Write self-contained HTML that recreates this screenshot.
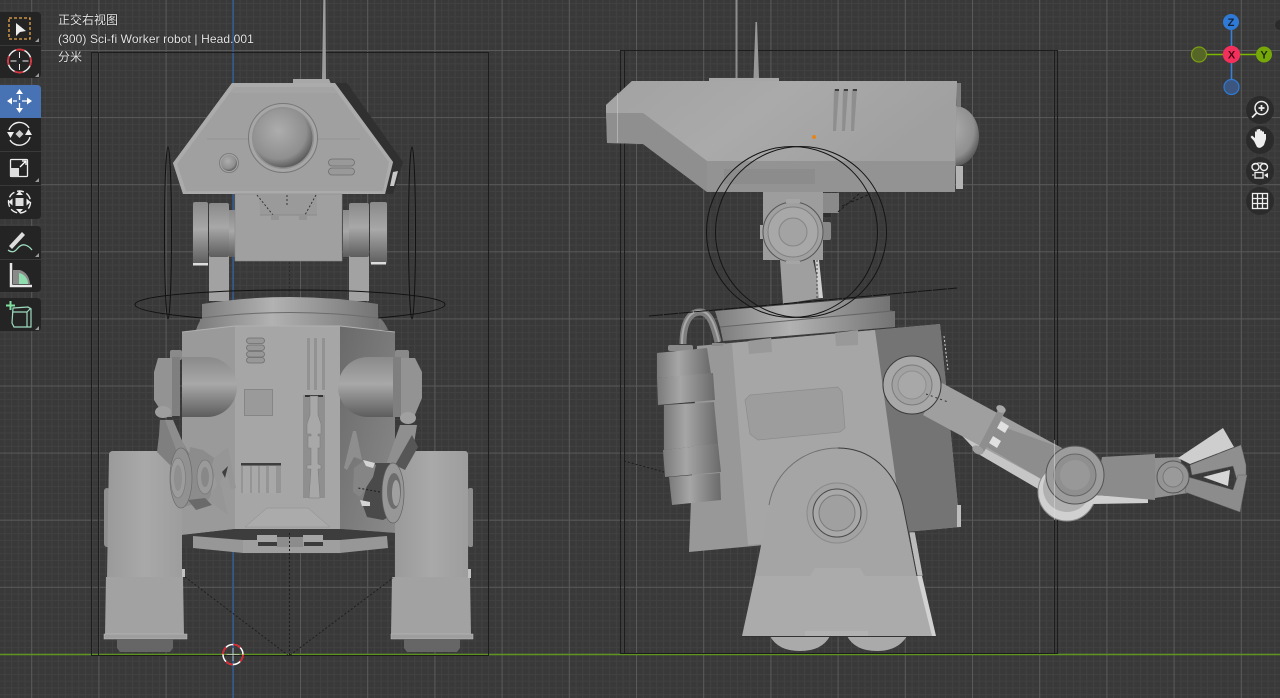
<!DOCTYPE html>
<html><head><meta charset="utf-8"><style>
html,body{margin:0;padding:0;width:1280px;height:698px;overflow:hidden;background:#3a3a3a}
svg{position:absolute;left:0;top:0}
.t{position:absolute;left:58px;color:#e6e6e6;font:12px/14px "Liberation Sans","Noto Sans CJK SC",sans-serif;white-space:nowrap;text-shadow:0 0 1px #000}
</style></head><body>
<svg width="1280" height="698" viewBox="0 0 1280 698">
<defs>
<pattern id="mi" width="6.72" height="6.71" patternUnits="userSpaceOnUse" x="31.2" y="50">
<path d="M0.5 0V6.71M0 0.5H6.72" stroke="#414141" stroke-width="1" fill="none"/>
</pattern>
<pattern id="ma" width="67.2" height="67.1" patternUnits="userSpaceOnUse" x="31.2" y="50">
<path d="M0.5 0V67.1M0 0.5H67.2" stroke="#595959" stroke-width="1" fill="none"/>
</pattern>
<linearGradient id="cv" x1="0" y1="0" x2="0" y2="1"><stop offset="0" stop-color="#8a8a8a"/><stop offset=".45" stop-color="#a8a8a8"/><stop offset="1" stop-color="#5d5d5d"/></linearGradient>
<linearGradient id="ch" x1="0" y1="0" x2="1" y2="0"><stop offset="0" stop-color="#777"/><stop offset=".5" stop-color="#a9a9a9"/><stop offset="1" stop-color="#777"/></linearGradient>
<linearGradient id="ch2" x1="0" y1="0" x2="1" y2="0"><stop offset="0" stop-color="#7a7a7a"/><stop offset=".4" stop-color="#a6a6a6"/><stop offset="1" stop-color="#6a6a6a"/></linearGradient>
<linearGradient id="dome" x1="0" y1="0" x2="1" y2="0"><stop offset="0" stop-color="#7d7d7d"/><stop offset=".4" stop-color="#b2b2b2"/><stop offset="1" stop-color="#737373"/></linearGradient>
<radialGradient id="sph" cx=".42" cy=".38" r=".68"><stop offset="0" stop-color="#adadad"/><stop offset=".7" stop-color="#8f8f8f"/><stop offset="1" stop-color="#4c4c4c"/></radialGradient>
<linearGradient id="dk" x1="0" y1="0" x2="1" y2="1"><stop offset="0" stop-color="#6a6a6a"/><stop offset="1" stop-color="#8a8a8a"/></linearGradient>
<linearGradient id="lg" x1="0" y1="0" x2="1" y2="0"><stop offset="0" stop-color="#9a9a9a"/><stop offset=".5" stop-color="#a9a9a9"/><stop offset="1" stop-color="#9d9d9d"/></linearGradient>
<linearGradient id="hd" x1="0" y1="0" x2="1" y2=".3"><stop offset="0" stop-color="#a2a2a2"/><stop offset=".5" stop-color="#aaa"/><stop offset="1" stop-color="#a0a0a0"/></linearGradient>
</defs>
<rect width="1280" height="698" fill="#393939"/>
<rect width="1280" height="698" fill="url(#mi)"/>
<rect width="1280" height="698" fill="url(#ma)"/>
<!-- axes -->
<path d="M233 0V698" stroke="#2f5c99" stroke-width="1.4"/>
<path d="M0 654.5H1280" stroke="#5f9420" stroke-width="1.4"/>
<!-- bounding boxes -->
<g fill="none" stroke="#1d1d1d" stroke-width="1">
<rect x="91.5" y="52.5" width="397" height="603"/>
<path d="M98.5 52V655"/>
<rect x="620.5" y="50.5" width="437" height="603"/>
<path d="M624.5 50V654M1054.5 50V654"/>
</g>

<!-- LEFT ROBOT -->
<g>
<path d="M322 80L323.3 0H325.5L326 80Z" fill="#9c9c9c"/>
<path d="M293 79H329L331 84H293Z" fill="#a8a8a8"/>
<path d="M333 83L347 83L403 162L393 194H380Z" fill="#303030"/>
<path d="M393 172L398 171L394 186L390 186Z" fill="#c8c8c8"/>
<path d="M232 83H335L393 162L385 194H183L173 163Z" fill="#a0a0a0"/>
<path d="M232 83H335L393 162L385 194H183L173 163ZM234 87L177 164L186 191H383L389 162L333 87Z" fill="#ababab" fill-rule="evenodd"/>
<path d="M234 87H333L338 93H230Z" fill="#a4a4a4"/>
<path d="M207 139H360" stroke="#929292" stroke-width=".8"/>
<circle cx="283" cy="138" r="34.5" fill="#a6a6a6" stroke="#787878"/>
<circle cx="283" cy="138" r="31" fill="#909090"/>
<circle cx="283" cy="138" r="29.5" fill="url(#sph)"/>
<circle cx="229" cy="163" r="9.5" fill="#a5a5a5" stroke="#7d7d7d"/>
<circle cx="229" cy="163" r="8" fill="url(#sph)"/>
<rect x="328.500" y="159" width="26" height="7" rx="3.500" fill="#999" stroke="#6d6d6d" stroke-width=".8"/>
<rect x="328.500" y="168" width="26" height="7" rx="3.500" fill="#999" stroke="#6d6d6d" stroke-width=".8"/>
<rect x="209" y="255" width="20" height="46" fill="#a2a2a2"/>
<rect x="349" y="255" width="20" height="46" fill="#a2a2a2"/>
<rect x="193" y="202" width="15" height="62" rx="2" fill="url(#cv)"/>
<rect x="209" y="203" width="20" height="54" rx="2" fill="url(#cv)"/>
<rect x="229" y="210" width="6" height="47" fill="url(#cv)"/>
<rect x="343" y="210" width="6" height="47" fill="url(#cv)"/>
<rect x="349" y="203" width="20" height="54" rx="2" fill="url(#cv)"/>
<rect x="370" y="202" width="17" height="62" rx="2" fill="url(#cv)"/>
<rect x="193" y="263" width="15" height="2.500" fill="#ddd"/>
<rect x="371" y="262" width="15" height="2.500" fill="#ddd"/>
<rect x="235" y="194" width="107" height="67" fill="#a0a0a0" stroke="#8a8a8a" stroke-width=".6"/>
<path d="M259 194L260 215H317V194Z" fill="#9a9a9a"/>
<g fill="none" stroke="#2c2c2c" stroke-width=".9" stroke-dasharray="2 2">
<path d="M257 195L273 215M287 195V207M316 195L305 215M289.500 262V295"/>
</g>
<path d="M260 215H317" stroke="#838383" stroke-width=".7"/>
<rect x="271" y="215" width="8" height="5" fill="#949494"/><rect x="299" y="215" width="8" height="5" fill="#949494"/>
<path d="M196 330Q200 318 206 315H376Q384 320 388 330Z" fill="url(#dome)"/>
<path d="M202 304Q290 290 378 304V318H202Z" fill="url(#dome)"/>
<path d="M200 319Q290 308 379 319V330H200Z" fill="url(#dome)"/>
<path d="M202 318Q290 307 378 318" fill="none" stroke="#6c6c6c"/>
<rect x="170" y="350" width="12" height="10" rx="2" fill="#8a8a8a"/>
<rect x="395" y="350" width="14" height="10" rx="2" fill="#8a8a8a"/>
<!-- body -->
<path d="M182 332L235 326V529L182 535Z" fill="#9a9a9a"/>
<path d="M235 326H340V529H235Z" fill="#a6a6a6"/>
<path d="M340 326L395 332V533L340 529Z" fill="url(#dk)"/>
<path d="M182 332L235 326H340L395 332" fill="none" stroke="#b0b0b0"/>
<g>
<path d="M182 357H207A30 30 0 0 1 207 417H182Z" fill="url(#cv)"/>
<path d="M393 357H368A30 30 0 0 0 368 417H393Z" fill="url(#cv)"/>
<path d="M158 358H172V417H165L154 400V372Z" fill="#939393"/>
<path d="M172 357H180V416H172Z" fill="#7f7f7f"/>
<rect x="393" y="357" width="8" height="60" fill="#7f7f7f"/>
<path d="M401 358H415L422 372V398L414 417H401Z" fill="#939393"/>
</g>
<g fill="#989898" stroke="#6f6f6f" stroke-width=".8">
<rect x="246.500" y="338" width="18" height="5.500" rx="2.700"/><rect x="246.500" y="345" width="18" height="5.500" rx="2.700"/><rect x="246.500" y="351.500" width="18" height="5.500" rx="2.700"/><rect x="246.500" y="357.500" width="18" height="5.500" rx="2.700"/>
</g>
<g fill="#929292"><rect x="307" y="338" width="3" height="52"/><rect x="314" y="338" width="3" height="52"/><rect x="322" y="338" width="3" height="52"/></g>
<rect x="244.500" y="389.500" width="28" height="26" fill="#9a9a9a" stroke="#868686"/>
<rect x="303" y="395" width="22" height="103" fill="#8f8f8f"/>
<rect x="305" y="395" width="18" height="2" fill="#333"/>
<path d="M310 396H318V415L321 424V434H318V436H320V448H318V464L321 465V469H318L320 498H309L311 469H307V465H311V448H308V436H311V434H307V424L310 415Z" fill="#a8a8a8" stroke="#7a7a7a" stroke-width=".5"/>
<rect x="241" y="464" width="40" height="29" fill="#959595"/>
<g fill="#a8a8a8"><rect x="243" y="466" width="7" height="27"/><rect x="252" y="466" width="6" height="27"/><rect x="260" y="466" width="6" height="27"/><rect x="269" y="466" width="7" height="27"/></g>
<rect x="241" y="463" width="40" height="2.500" fill="#3e3e3e"/>
<path d="M245 527L267 508H308L330 527Z" fill="#ababab" stroke="#8c8c8c" stroke-width=".5"/>
<path d="M182 535L235 529H340L395 533V540L340 553H243L182 545Z" fill="#3d3d3d"/>
<path d="M193 536L243 540H340L387 536L388 548L340 553H243L193 548Z" fill="#979797"/>
<rect x="243" y="540" width="97" height="13" fill="#9f9f9f"/>
<rect x="257" y="535" width="20" height="7" fill="#a6a6a6"/><rect x="303" y="535" width="20" height="7" fill="#a6a6a6"/>
<rect x="258" y="542" width="19" height="4" fill="#3b3b3b"/><rect x="304" y="542" width="19" height="4" fill="#3b3b3b"/>
<rect x="277" y="537" width="26" height="10" fill="#8c8c8c"/>
<!-- legs -->
<rect x="104" y="488" width="6" height="59" rx="3" fill="#8e8e8e"/>
<rect x="468" y="488" width="5" height="59" rx="2" fill="#8e8e8e"/>
<path d="M109 455Q109 451 113 451H170Q180 452 182 462V578H107Z" fill="url(#lg)"/>
<path d="M395 462Q397 452 405 451H465Q468 451 468 455V578H395Z" fill="url(#lg)"/>
<path d="M106 577H183L184 635H105Z" fill="#a2a2a2"/>
<path d="M392 577H470L471 635H391Z" fill="#a2a2a2"/>
<rect x="182" y="569" width="3" height="8" fill="#c2c2c2"/><rect x="468" y="569" width="3" height="9" fill="#c2c2c2"/>
<rect x="104" y="634" width="83" height="5" fill="#9e9e9e" stroke="#c0c0c0" stroke-width=".5"/>
<rect x="391" y="634" width="82" height="5" fill="#9e9e9e" stroke="#c0c0c0" stroke-width=".5"/>
<path d="M117 639H173V648L170 652H120L117 648Z" fill="#666"/>
<path d="M404 639H460V648L457 652H407L404 648Z" fill="#666"/>
<!-- small left arm -->
<path d="M160 420H173L183 443L190 455L170 465L157 452L159 435Z" fill="#7f7f7f"/>
<path d="M165 420H173L183 443L187 452L177 452Z" fill="#8d8d8d"/>
<ellipse cx="163" cy="412" rx="8" ry="6" fill="#9e9e9e"/>
<path d="M190 447L203 450L217 460L210 500L183 507Z" fill="#8c8c8c"/>
<path d="M188 500L205 498L212 505L196 510Z" fill="#6a6a6a"/>
<ellipse cx="181" cy="478" rx="11" ry="30" fill="#919191" stroke="#6c6c6c" stroke-width=".7"/>
<ellipse cx="178" cy="478" rx="7.500" ry="20" fill="#9c9c9c" stroke="#7a7a7a" stroke-width=".7"/>
<ellipse cx="178" cy="478" rx="4" ry="13" fill="#8f8f8f"/>
<path d="M214 458L228 447L236 488L231 489L226 470L220 482L228 515L208 500L217 485L212 465Z" fill="#969696"/>
<ellipse cx="205" cy="477" rx="8" ry="17" fill="#9a9a9a" stroke="#777" stroke-width=".7"/>
<ellipse cx="205" cy="477" rx="4" ry="10" fill="#888"/>
<path d="M222 472L228 466L225 478Z" fill="#3f3f3f"/>
<!-- small right arm -->
<path d="M400 425H417L413 450L405 463L385 468Z" fill="#8f8f8f"/>
<path d="M412 435L418 447L405 470L395 465Z" fill="#565656"/>
<ellipse cx="408" cy="418" rx="8" ry="6" fill="#a0a0a0"/>
<path d="M373 463L390 463L392 515L383 520L367 517L362 503Z" fill="#4a4a4a"/>
<ellipse cx="393" cy="493" rx="11" ry="30" fill="#979797" stroke="#636363" stroke-width=".7"/>
<ellipse cx="394" cy="491" rx="7" ry="18" fill="#6d6d6d"/>
<ellipse cx="396" cy="493" rx="4" ry="13" fill="#a0a0a0"/>
<path d="M350 443L353 431L356 431L362 460L354 457L347 470L344 468Z" fill="#8e8e8e"/>
<path d="M354 468L365 460L376 465L373 477L360 497L353 492Z" fill="#858585"/>
<path d="M363 460L375 463L373 468L366 466ZM360 500L370 502V506L362 506Z" fill="#d4d4d4"/>
<!-- dashed -->
<g fill="none" stroke="#1e1e1e" stroke-width="1" stroke-dasharray="2 2">
<path d="M185 577L289 656L393 578M289.500 533V656"/>
<path d="M380 492L358 488"/>
</g>
<!-- empties -->
<g fill="none" stroke="#111" stroke-width="1">
<path d="M202 318Q135 312 135 304.500C135 296 206 290 290 290S445 296 445 304.500Q445 312 378 318"/>
<ellipse cx="168" cy="233" rx="3.500" ry="86"/>
<ellipse cx="412" cy="233" rx="3.500" ry="86"/>
</g>
<circle cx="233" cy="654.500" r="10" fill="none" stroke="#fff" stroke-width="1.500"/>
<circle cx="233" cy="654.500" r="10" fill="none" stroke="#e0202c" stroke-width="1.600" stroke-dasharray="7.700 8"/>
<path d="M233 648V661M226.500 654.500H239.500" stroke="#ccc" stroke-width=".8"/>
</g>

<!-- RIGHT ROBOT -->
<g>
<path d="M735.500 78V0H737.500V78Z" fill="#8d8d8d"/>
<path d="M753.500 78L755.500 22H757L759 78Z" fill="#989898"/>
<rect x="709" y="78" width="70" height="3.500" fill="#a6a6a6"/>
<ellipse cx="955" cy="136" rx="24" ry="30" fill="url(#sph)"/>
<rect x="957" y="83" width="4" height="24" fill="#7e7e7e"/>
<rect x="956" y="166" width="7" height="23" fill="#b4b4b4"/>
<path d="M632 81H957L955 192H707L643 144L607 143L606 105Z" fill="#939393"/>
<path d="M632 81H957L955 161H707L643 113H606V105Z" fill="url(#hd)"/>
<path d="M606 113H643L707 161V192L643 144L607 143Z" fill="#8f8f8f"/>
<path d="M617.500 93V143" stroke="#ccc" stroke-width=".8" opacity=".7"/>
<rect x="724" y="169" width="91" height="15" fill="#8c8c8c"/>
<g fill="#8e8e8e"><path d="M834 89H839L836 131H833Z"/><path d="M843 89H848L845 131H842Z"/><path d="M852 89H857L854 131H851Z"/></g>
<g fill="#3e3e3e"><rect x="835" y="89" width="4" height="2"/><rect x="844" y="89" width="4" height="2"/><rect x="853" y="89" width="4" height="2"/></g>
<circle cx="814" cy="137" r="2" fill="#e5861a"/>
<path d="M780 260H813L821 298L783 304Z" fill="#9f9f9f"/>
<path d="M815 260H819L823 298H819Z" fill="#cfcfcf"/>
<path d="M817 260V298" stroke="#444" stroke-dasharray="2 2" stroke-width="1"/>
<rect x="763" y="192" width="60" height="68" fill="#9d9d9d"/>
<rect x="823" y="193" width="16" height="20" fill="#8a8a8a"/>
<rect x="824" y="213" width="7" height="4" fill="#2f2f2f"/>
<rect x="760" y="225" width="6" height="14" fill="#a4a4a4"/><rect x="820" y="222" width="11" height="18" rx="2" fill="#888"/>
<circle cx="793" cy="232" r="30" fill="#a0a0a0" stroke="#555"/>
<circle cx="793" cy="232" r="25" fill="#a8a8a8" stroke="#808080"/>
<circle cx="793" cy="232" r="14" fill="#a3a3a3" stroke="#858585"/>
<path d="M786 199H800V203H786ZM786 261H800V264H786Z" fill="#a5a5a5"/>
<path d="M838 212L860 193M842 206L870 194" stroke="#1b1b1b" stroke-dasharray="3 2" fill="none"/>
<path d="M715 311L890 296V312L720 327Z" fill="url(#dome)"/>
<path d="M720 327L895 311V327L723 341Z" fill="url(#dome)"/>
<path d="M720 327L892 311" stroke="#666" fill="none"/>
<!-- body -->
<path d="M697 346L940 324L960 527L689 552Z" fill="#989898"/>
<path d="M732 343L875 330L903 532L748 545Z" fill="#a6a6a6"/>
<path d="M875 330L940 324L960 527L903 532Z" fill="#747474"/>
<rect x="957" y="505" width="4" height="22" fill="#bdbdbd"/>
<path d="M944 336L948 370" stroke="#ccc" stroke-dasharray="2 2"/>
<path d="M748 341L771 338L772 352L749 354Z" fill="#999"/>
<path d="M835 333L858 330L858 345L836 346Z" fill="#999"/>
<path d="M750 395L838 387L842 392L845 428L840 432L758 440L750 434L745 400Z" fill="#9d9d9d" stroke="#8c8c8c" stroke-width=".7"/>
<!-- canister + handle -->
<path d="M683 344C683 322 690 312 700 312C710 312 714 325 718 342" fill="none" stroke="#7e7e7e" stroke-width="7"/>
<path d="M682 344C682 322 690 311 700 311C710 311 715 325 719 342" fill="none" stroke="#a8a8a8" stroke-width="2"/>
<path d="M712 343H725L722 346H712Z" fill="#8a8a8a"/>
<rect x="668" y="345" width="25" height="6" rx="2" fill="#8a8a8a"/>
<path d="M657 353L707 348L711 374L657 378Z" fill="url(#ch2)"/>
<path d="M657 378L713 373L715 400L658 405Z" fill="url(#ch2)"/>
<path d="M664 405L714 402L718 444L664 450Z" fill="url(#ch2)"/>
<path d="M663 450L718 444L721 472L665 477Z" fill="url(#ch2)"/>
<path d="M669 477L720 473L721 500L672 505Z" fill="url(#ch2)"/>
<path d="M624 461L664 472" stroke="#1d1d1d" stroke-dasharray="2 2" fill="none"/>
<!-- wheels -->
<path d="M770 636H830Q822 651 800 651Q778 651 770 636ZM847 636H907Q898 651 877 651Q855 651 847 636Z" fill="#aaa"/>
<path d="M909 532L915 532L923 576H917Z" fill="#bbb" stroke="#333" stroke-width=".5"/>
<path d="M755 576L769 505C775 470 805 448 838 448C870 448 895 470 903 505L917 576Z" fill="#a5a5a5"/>
<path d="M769 505C775 470 805 448 838 448" fill="none" stroke="#707070"/>
<path d="M838 448C870 448 895 470 903 505L917 576" fill="none" stroke="#3a3a3a"/>
<circle cx="837" cy="513" r="30" fill="#a2a2a2" stroke="#8a8a8a"/>
<circle cx="837" cy="513" r="24" fill="#a8a8a8" stroke="#4a4a4a"/>
<circle cx="837" cy="513" r="18" fill="#a0a0a0" stroke="#7b7b7b"/>
<path d="M810 576L815 568H860L865 576Z" fill="#ababab"/>
<path d="M755 576H917L933 636H742Z" fill="#ababab"/>
<path d="M922 576L936 636H932L917 576Z" fill="#d2d2d2"/>
<rect x="805" y="631" width="63" height="5" fill="#b2b2b2"/>
<path d="M742 636.500H936" stroke="#333" stroke-width="1"/>
<!-- arm -->
<path d="M952 425L1043 480L1040 490L980 455Z" fill="#c6c6c6"/>
<path d="M942 383L1062 448L1043 480L923 415Z" fill="#9f9f9f"/>
<path d="M998 425L1062 448L1043 480L985 446Z" fill="#8d8d8d"/>
<path d="M1001 421L1009 426L1005 433L997 428ZM993 436L1001 441L997 448L989 443Z" fill="#e0e0e0"/>
<path d="M1000 406L1006 410L984 452L978 448Z" fill="#8e8e8e"/>
<ellipse cx="1001" cy="409" rx="5" ry="3.500" fill="#a8a8a8" transform="rotate(30 1001 409)"/>
<ellipse cx="978" cy="450" rx="6" ry="4" fill="#9e9e9e" transform="rotate(30 978 450)"/>
<circle cx="912" cy="385" r="29" fill="#a8a8a8" stroke="#3a3a3a"/>
<circle cx="912" cy="385" r="20" fill="#a2a2a2" stroke="#7b7b7b"/>
<circle cx="912" cy="385" r="14" fill="#a8a8a8" stroke="#8f8f8f"/>
<path d="M926 394L948 402" stroke="#333" stroke-dasharray="2 3"/>
<circle cx="1067" cy="492" r="29" fill="#d0d0d0" stroke="#8c8c8c"/>
<circle cx="1067" cy="488" r="24" fill="#b0b0b0"/>
<path d="M1093 495L1148 498L1148 503L1093 504Z" fill="#cfcfcf"/>
<path d="M1102 457L1155 454V500L1095 495Z" fill="#8b8b8b"/>
<path d="M1155 458L1180 457L1188 493L1155 498Z" fill="#919191"/>
<path d="M1178 458L1223 428L1234 447L1190 464Z" fill="#cecece"/>
<path d="M1203 477L1230 470L1228 486Z" fill="#d6d6d6"/>
<path d="M1190 465L1241 445L1246 465V475L1237 480L1233 466L1192 475Z" fill="#8f8f8f" stroke="#666" stroke-width=".5"/>
<path d="M1188 477L1233 490L1238 475L1247 475L1240 512L1185 492Z" fill="#8c8c8c" stroke="#666" stroke-width=".5"/>
<circle cx="1075" cy="475" r="29" fill="#9c9c9c" stroke="#545454"/>
<circle cx="1075" cy="475" r="21" fill="#8f8f8f" stroke="#666"/>
<circle cx="1075" cy="475" r="15" fill="#989898"/>
<circle cx="1173" cy="477" r="16" fill="#949494" stroke="#555"/>
<circle cx="1173" cy="477" r="10" fill="#9a9a9a" stroke="#777"/>
<g fill="none" stroke="#141414" stroke-width="1">
<circle cx="792" cy="232" r="85.500"/><circle cx="801" cy="232" r="85.500"/>
<path d="M649 316L957 288" stroke-dasharray="14 1"/>
</g>
<path d="M1054.500 440V520" stroke="#ddd" stroke-width="1" opacity=".5"/>
</g>

<!-- TOOLBAR -->
<g fill="#242424">
<path d="M0 12H37Q41 12 41 16V74Q41 78 37 78H0Z"/>
<path d="M0 118H41V215Q41 219 37 219H0Z"/>
<path d="M0 226H37Q41 226 41 230V288Q41 292 37 292H0Z"/>
<path d="M0 298H37Q41 298 41 302V327Q41 331 37 331H0Z"/>
</g>
<path d="M0 85H37Q41 85 41 89V118H0Z" fill="#4772b3"/>
<path d="M0 45.500H41M0 151.500H41M0 185.500H41M0 259.500H41" stroke="#393939"/>
<rect x="9" y="18" width="21" height="21" fill="none" stroke="#e9a94c" stroke-width="1.300" stroke-dasharray="3 2"/>
<path d="M16 23V36L20 32L26 31Z" fill="#eee"/>
<g fill="#999"><path d="M39 38V42H35Z"/><path d="M39 74V78H35Z" transform="translate(0 -1)"/><path d="M39 178V182H35Z"/><path d="M39 253V257H35Z"/><path d="M39 326V330H35Z"/></g>
<circle cx="19.500" cy="61" r="11.500" fill="none" stroke="#eee" stroke-width="1.500"/>
<circle cx="19.500" cy="61" r="11.500" fill="none" stroke="#d8323c" stroke-width="1.700" stroke-dasharray="9 9" stroke-dashoffset="4"/>
<path d="M19.500 52V58M19.500 64V70M10.500 61H16.500M22.500 61H28.500" stroke="#eee"/>
<g fill="#fff"><path d="M19.500 89L23 94H16ZM19.500 113L23 108H16ZM7 101L12 97.500V104.500ZM32 101L27 97.500V104.500Z"/></g>
<path d="M19.500 95V100M19.500 103V108M13 101H17M22 101H27" stroke="#fff" stroke-width="1.300"/>
<path d="M9 130A11 11 0 0 1 29 128M30 137A11 11 0 0 1 10 140" fill="none" stroke="#eee" stroke-width="1.400"/>
<path d="M7 132L14 132L10.500 138ZM32 135H25L28.500 129Z" fill="#eee"/>
<path d="M19.500 130L23.500 134L19.500 138L15.500 134Z" fill="#ccc"/>
<rect x="10.500" y="159.500" width="17" height="17" rx="1" fill="none" stroke="#eee" stroke-width="1.300"/>
<rect x="10" y="168" width="9" height="9" fill="#ddd"/>
<path d="M20 167L26 161M22 161H26V165" fill="none" stroke="#fff" stroke-width="1.300"/>
<circle cx="19.500" cy="202" r="11" fill="none" stroke="#eee" stroke-width="1.400" stroke-dasharray="7 2.800"/>
<rect x="15.500" y="198" width="8" height="8" fill="#ddd"/>
<path d="M19.500 191L23 195H16ZM19.500 213L23 209H16ZM8.500 202L12.500 198.500V205.500ZM30.500 202L26.500 198.500V205.500Z" fill="#eee"/>
<path d="M9 246L22 232L25 235L12 249Z" fill="#ddd"/>
<path d="M8 250Q13 254 17 249T25 245T32 250" fill="none" stroke="#9fdcc0" stroke-width="1.300"/>
<path d="M11 263V286H32" fill="none" stroke="#e8e8e8" stroke-width="2.500"/>
<path d="M13 270V284H30Q29 273 20 270Z" fill="#8a8a8a"/>
<path d="M19 273A11 11 0 0 1 28 284H19Z" fill="#8fdcae"/>
<path d="M13 308L28 307L31 309V327H14L12 323Z" fill="none" stroke="#9fdcc0" stroke-width="1.200"/>
<path d="M13 312H27V327M27 312L31 308" fill="none" stroke="#9fdcc0" stroke-width="1.200"/>
<path d="M10.500 301V310M6 305.500H15" stroke="#7fe0a0" stroke-width="2"/>

<!-- GIZMO -->
<path d="M1231.500 54.500V22M1231.500 54.500V87" stroke="#3a80d8" stroke-width="1.600"/>
<path d="M1231.500 54.500H1264M1231.500 54.500H1199" stroke="#7db800" stroke-width="1.600"/>
<circle cx="1231" cy="22" r="8" fill="#2f7ad6"/>
<circle cx="1231.500" cy="87" r="7.500" fill="#3d5680" stroke="#2f7ad6" stroke-width="1.200"/>
<circle cx="1199" cy="54.500" r="7.500" fill="#566627" stroke="#7a9d12" stroke-width="1.200"/>
<circle cx="1264" cy="54.500" r="8" fill="#76a80a"/>
<circle cx="1231.500" cy="54.500" r="8.700" fill="#f3305c"/>
<g font-family="Liberation Sans,sans-serif" font-size="11" font-weight="bold" fill="#152238" text-anchor="middle">
<text x="1231" y="26">Z</text><text x="1231.500" y="58.500" fill="#4a0515">X</text><text x="1264" y="58.500" fill="#1d2c00">Y</text>
</g>
<circle cx="1280" cy="25" r="5" fill="#2a2a2a"/>
<!-- nav buttons -->
<g fill="#2b2b2b"><circle cx="1260" cy="110" r="14"/><circle cx="1260" cy="140" r="14"/><circle cx="1260" cy="171" r="14"/><circle cx="1260" cy="201" r="14"/></g>
<circle cx="1261.500" cy="108" r="6.500" fill="none" stroke="#eee" stroke-width="1.500"/>
<path d="M1258.500 108H1264.500M1261.500 105V111M1256.500 113L1252 117.500" stroke="#eee" stroke-width="1.700"/>
<path d="M1254 141L1250.500 137L1252 135.500L1255 138V131.500H1256.700V129.500H1258.500V129H1260.200V130.500H1262V131.500H1264V134H1266V139L1264 145Q1260 149.500 1257 147Z" fill="#eee"/>
<circle cx="1255.500" cy="167" r="3.500" fill="none" stroke="#eee" stroke-width="1.400"/>
<circle cx="1264" cy="167" r="3.500" fill="none" stroke="#eee" stroke-width="1.400"/>
<path d="M1252 165L1258 163H1262L1267 165" fill="none" stroke="#eee" stroke-width="1"/>
<rect x="1255" y="172.500" width="8" height="5.500" fill="none" stroke="#eee" stroke-width="1.300"/>
<path d="M1264 175L1268 173V178Z" fill="#eee"/>
<path d="M1252 175H1254" stroke="#eee"/>
<g fill="none" stroke="#eee" stroke-width="1.300">
<rect x="1252.500" y="193.500" width="15" height="15"/>
<path d="M1257.500 193.500V208.500M1262.500 193.500V208.500M1252.500 198.500H1267.500M1252.500 203.500H1267.500"/>
</g>
</svg>
<div class="t" style="top:13px">正交右视图</div>
<div class="t" style="top:32px;letter-spacing:.1px">(300) Sci-fi Worker robot | Head.001</div>
<div class="t" style="top:50px">分米</div>
</body></html>
